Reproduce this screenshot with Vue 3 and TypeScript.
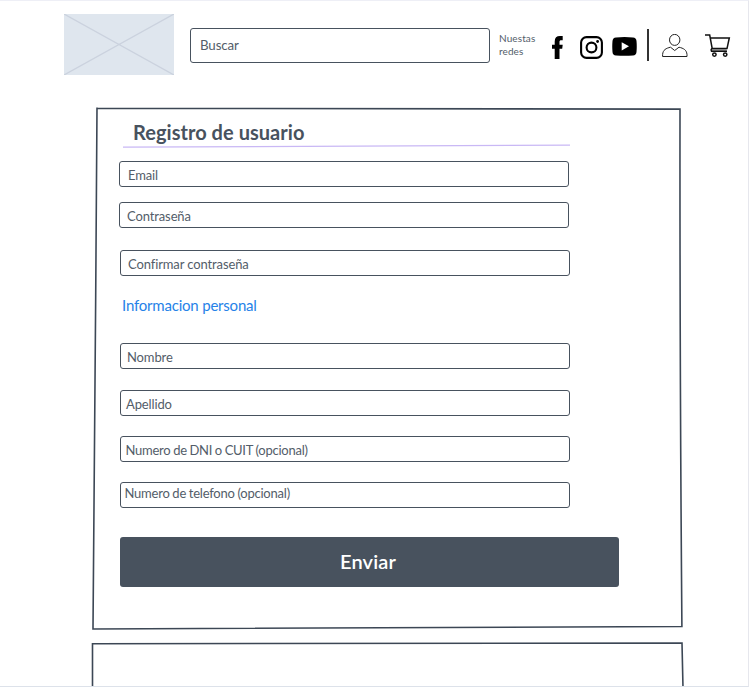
<script setup lang="ts">
interface Field {
  id: string
  label: string
}

const fields: Field[] = [
  { id: 'email', label: 'Email' },
  { id: 'password', label: 'Contraseña' },
  { id: 'confirm', label: 'Confirmar contraseña' },
]

const personal: Field[] = [
  { id: 'name', label: 'Nombre' },
  { id: 'surname', label: 'Apellido' },
  { id: 'document', label: 'Numero de DNI o CUIT (opcional)' },
  { id: 'phone', label: 'Numero de telefono (opcional)' },
]
</script>

<template>
  <div class="page">
    <header class="header">
      <svg class="logo" viewBox="0 0 110 61">
        <rect width="110" height="61" fill="#dfe6ee" />
        <path d="M0 0L110 61M110 0L0 61" stroke="#cbd2de" stroke-width="1.3" />
      </svg>
      <div class="search"><span>Buscar</span></div>
      <p class="social-label">Nuestas<br />redes</p>
      <svg class="icon facebook" viewBox="0 0 11 23">
        <path d="M2.700 23V12.700H0V8.700H2.700V5.400C2.700 1.800 4.600 0 7.900 0H10.700V4.200H9.300C7.900 4.200 7.500 4.700 7.500 5.800V8.700H10.700L10.200 12.700H7.500V23Z" />
      </svg>
      <svg class="icon instagram" viewBox="0 0 23 23">
        <rect x="1.1" y="1.1" width="20.8" height="20.8" rx="5.4" fill="none" stroke="#000" stroke-width="2.1" />
        <circle cx="11.5" cy="11.5" r="4.9" fill="none" stroke="#000" stroke-width="2.1" />
        <circle cx="17.6" cy="5.5" r="1.4" />
      </svg>
      <svg class="icon youtube" viewBox="0 0 25 19">
        <path d="M4 .4Q12.5-.3 21 .4Q24.2.6 24.5 4Q25 9.500 24.500 15Q24.200 18.200 21 18.500Q12.500 19.200 4 18.500Q.7 18.200.5 15Q0 9.500.5 4Q.7.7 4 .4Z" />
        <path d="M9.700 5.200L17 9.300L9.700 13.400Z" fill="#fff" />
      </svg>
      <span class="divider"></span>
      <svg class="icon user" viewBox="0 0 26 24">
        <g fill="none" stroke="#222" stroke-width="1">
          <ellipse cx="12.700" cy="5.900" rx="5.200" ry="5.500" />
          <path d="M.6 22.500V20.500C1 15.800 4 14.300 8.500 13.200L12.700 16.500L17 13.200C21.500 14.300 24.600 15.800 25 20.500V22.500Z" />
        </g>
      </svg>
      <svg class="icon cart" viewBox="0 0 26 24">
        <path d="M6.300 14.600H21.700V17.400H6.300Z" fill="#aaa" />
        <g fill="none" stroke="#111" stroke-width="1.500">
          <path d="M0 1H4.700L7.200 14.600M5.500 3.900H24.300L22 14.600H6.800Q5.500 16 6.500 17.300H22" />
          <circle cx="9.400" cy="20.600" r="1.700" />
          <circle cx="20.200" cy="20.600" r="1.700" />
        </g>
      </svg>
    </header>

    <main class="card">
      <svg class="sketch" viewBox="0 0 592 524">
        <path d="M5 2.200Q300 1.500 588 3.100Q587.700 250 589.900 520.500Q300 521.200 1 523Q1.700 360 3.700 190Q4 100 5 1.500" />
      </svg>
      <h1 class="title">Registro de usuario</h1>
      <svg class="underline" viewBox="0 0 449 5">
        <path d="M0 3.200Q230 1.700 447 1.100" />
      </svg>
      <div v-for="f in fields" :key="f.id" class="field" :class="f.id"><span>{{ f.label }}</span></div>
      <h2 class="subtitle">Informacion personal</h2>
      <div v-for="f in personal" :key="f.id" class="field" :class="f.id"><span>{{ f.label }}</span></div>
      <button class="submit" type="button">Enviar</button>
    </main>

    <section class="next-card">
      <svg class="sketch" viewBox="0 0 594 60">
        <path d="M1.500 60V2.700Q300 1.700 591 2L592.300 60" />
      </svg>
    </section>
  </div>
</template>

<style>
body {
  background: #fff;
}
</style>

<style scoped>
.page {
  position: relative;
  box-sizing: border-box;
  width: 749px;
  height: 687px;
  overflow: hidden;
  border-top: 1px solid #eeeff6;
  border-right: 1px solid #e6e7ed;
  border-bottom: 1px solid #dde2ea;
  background: #fff;
  color: #48525e;
  font-family: Lato, 'Liberation Sans', sans-serif;
}

.header {
  display: flex;
  align-items: flex-start;
  height: 105px;
  padding: 13px 0 0 64px;
  box-sizing: border-box;
}

.header > * {
  flex: none;
}

.logo {
  width: 110px;
  height: 61px;
}

.search {
  box-sizing: border-box;
  width: 300px;
  height: 35px;
  margin: 14px 0 0 16px;
  padding-left: 9px;
  border: 1px solid #48525e;
  border-radius: 3px;
  color: #535d69;
  font-size: 13.3px;
  letter-spacing: -0.1px;
  line-height: 33px;
}

.social-label {
  width: 52px;
  margin: 18px 0 0 9px;
  color: #535d69;
  font-size: 10px;
  line-height: 13px;
  letter-spacing: 0.1px;
}

.icon {
  display: block;
}

.facebook {
  width: 11px;
  height: 23px;
  margin: 21.500px 0 0 1px;
}

.instagram {
  width: 23px;
  height: 23px;
  margin: 21.500px 0 0 17px;
}

.youtube {
  width: 25px;
  height: 19px;
  margin: 23px 0 0 9px;
}

.divider {
  width: 2px;
  height: 32px;
  margin: 14.500px 0 0 10px;
  background: #333;
}

.user {
  width: 26px;
  height: 24px;
  margin: 20px 0 0 13px;
}

.cart {
  width: 26px;
  height: 24px;
  margin: 20px 0 0 17px;
}

.card {
  position: relative;
  display: flex;
  flex-direction: column;
  align-items: flex-start;
  box-sizing: border-box;
  width: 592px;
  height: 524px;
  margin-left: 92px;
  padding-left: 28px;
}

.sketch {
  position: absolute;
  inset: 0;
  width: 100%;
  height: 100%;
  fill: none;
  stroke: #3c4755;
  stroke-width: 1.600px;
}

.title {
  margin: 14px 0 0 13px;
  font-size: 20px;
  font-weight: 700;
  line-height: 24px;
  letter-spacing: 0.04px;
  white-space: nowrap;
}

.underline {
  width: 449px;
  height: 5px;
  margin: 0 0 0 3px;
  fill: none;
  stroke: #c9b8f5;
  stroke-width: 1.300px;
}

.field {
  flex: none;
  box-sizing: border-box;
  width: 450px;
  height: 26px;
  border: 1px solid #48525e;
  border-radius: 3px;
  color: #535d69;
  font-size: 13px;
  line-height: 27px;
  letter-spacing: -0.12px;
  white-space: nowrap;
}

.email {
  margin: 12px 0 0 -1px;
  padding-left: 8px;
}

.password {
  margin: 15px 0 0 -1px;
  padding-left: 7px;
}

.confirm {
  margin-top: 22px;
  padding-left: 7px;
}

.subtitle {
  margin: 19px 0 0 2px;
  font-size: 15px;
  font-weight: 400;
  line-height: 20px;
  letter-spacing: -0.2px;
  color: #2682e8;
}

.name {
  margin-top: 28px;
  padding-left: 6px;
}

.surname {
  margin-top: 21px;
  padding-left: 5px;
}

.document {
  margin-top: 20px;
  padding-left: 4.500px;
  letter-spacing: -0.25px;
  word-spacing: -0.4px;
}

.phone {
  margin-top: 20px;
  padding-left: 3.500px;
  line-height: 20px;
  letter-spacing: -0.22px;
  word-spacing: -0.4px;
}

.submit {
  width: 499px;
  height: 50px;
  margin: 29px 0 0;
  padding: 0 3px 2px 0;
  border: 0;
  border-radius: 3px;
  background: #48525e;
  color: #fff;
  font: 600 20px/48px Lato, sans-serif;
  letter-spacing: 0.15px;
}

.next-card {
  position: relative;
  width: 594px;
  height: 60px;
  margin: 11px 0 0 91px;
}
</style>
